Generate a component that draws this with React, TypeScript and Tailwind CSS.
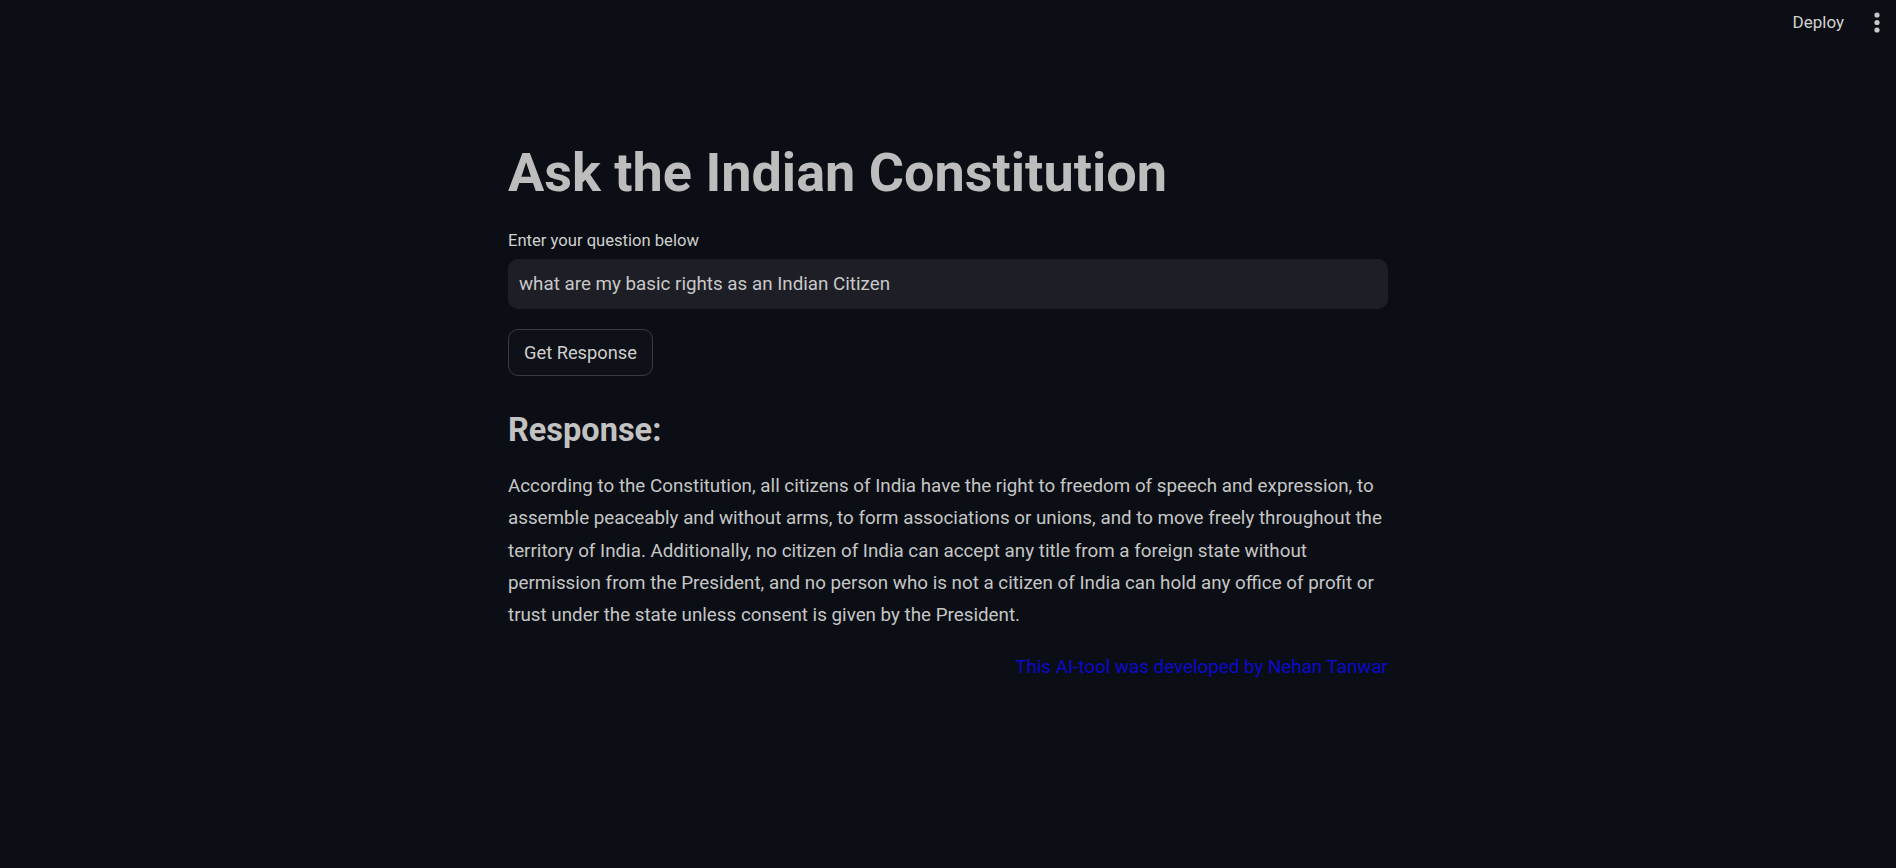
import { useState } from "react";

const font = { fontFamily: 'Roboto, "Noto Sans", sans-serif' };

const answerLines = [
  "According to the Constitution, all citizens of India have the right to freedom of speech and expression, to",
  "assemble peaceably and without arms, to form associations or unions, and to move freely throughout the",
  "territory of India. Additionally, no citizen of India can accept any title from a foreign state without",
  "permission from the President, and no person who is not a citizen of India can hold any office of profit or",
  "trust under the state unless consent is given by the President.",
];

function TopBar() {
  return (
    <header className="flex h-[46px] items-center justify-end gap-[26px] pr-[12px]">
      <button type="button" className="text-[17px] text-[#d2d2d2]">
        Deploy
      </button>
      <button type="button" aria-label="Main menu" className="flex h-[36px] w-[14px] items-center justify-center">
        <svg width="8" height="24" viewBox="0 0 8 24" className="fill-[#c9c9c9]">
          <circle cx="4" cy="4" r="2.6" />
          <circle cx="4" cy="11.5" r="2.6" />
          <circle cx="4" cy="19" r="2.6" />
        </svg>
      </button>
    </header>
  );
}

export default function App() {
  const [question, setQuestion] = useState("what are my basic rights as an Indian Citizen");

  return (
    <div style={font} className="min-h-screen w-full bg-[#0b0e14]">
      <TopBar />
      <main className="mx-auto w-[880px] pt-[93px]">
        <h1 className="text-[54px] font-bold leading-[67px] text-[#bdbdbd]">
          Ask the Indian Constitution
        </h1>

        <label className="mt-[24px] block text-[16.6px] leading-[22px] text-[#d0d0d0]">
          Enter your question below
        </label>
        <input
          value={question}
          onChange={(e) => setQuestion(e.target.value)}
          className="mt-[7px] block h-[50px] w-full rounded-[10px] bg-[#1e1f26] px-[11px] text-[18.8px] text-[#c8c8c8] outline-none"
        />

        <button
          type="button"
          className="mt-[20px] h-[47px] w-[145px] rounded-[10px] border border-[#3a3b43] bg-[#0e1117] text-[18.3px] text-[#cfcfcf]"
        >
          Get Response
        </button>

        <h3 className="mt-[32px] text-[32.5px] font-bold leading-[44px] text-[#c2c2c2]">
          Response:
        </h3>
        <p className="mt-[18px] whitespace-nowrap text-[18.8px] leading-[32.3px] text-[#c6c6c6]">
          {answerLines.map((line, i) => (
            <span key={i} className="block">
              {line}
            </span>
          ))}
        </p>

        <p className="mt-[20px] text-right text-[18.8px] leading-[32px] text-[#0a0acd]">
          This AI-tool was developed by Nehan Tanwar
        </p>
      </main>
    </div>
  );
}
